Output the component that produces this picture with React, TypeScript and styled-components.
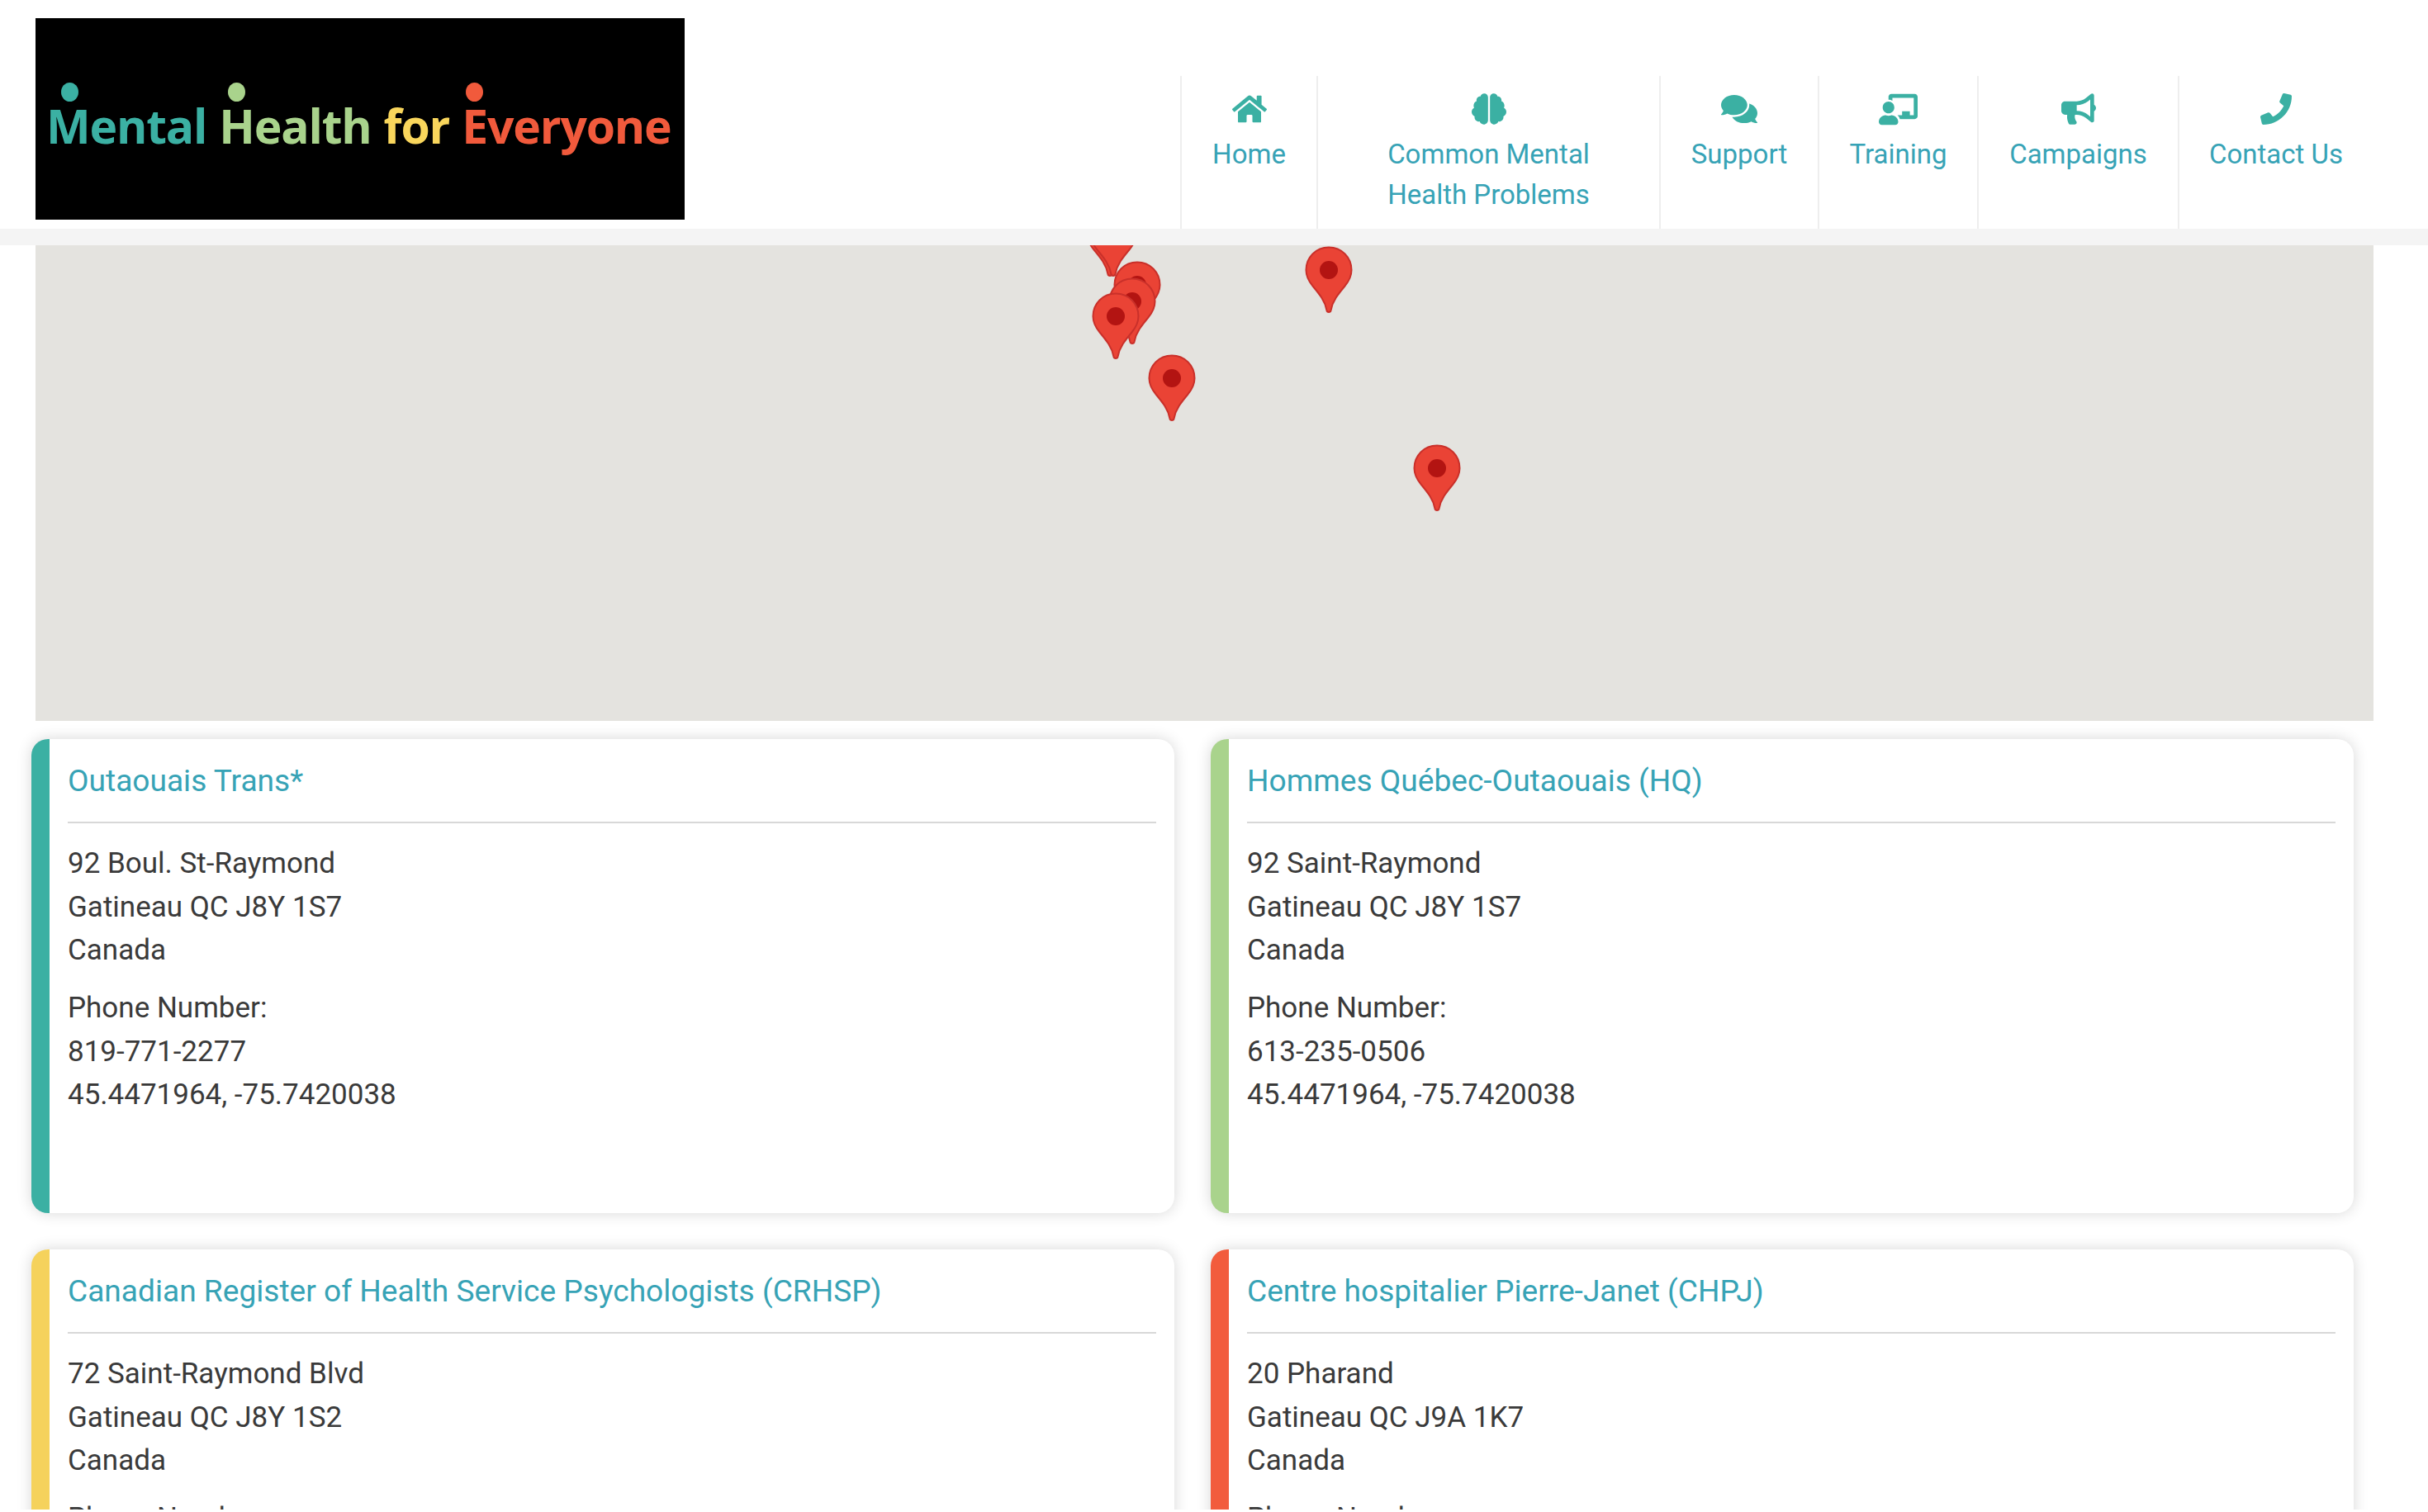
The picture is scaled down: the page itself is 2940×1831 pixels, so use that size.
import React from 'react';
import styled, { createGlobalStyle } from 'styled-components';
import { FaHome, FaBrain, FaComments, FaChalkboardTeacher, FaBullhorn, FaPhone } from 'react-icons/fa';

const GlobalStyle = createGlobalStyle`
  html, body {
    margin: 0;
    padding: 0;
    background: #fff;
    font-family: Roboto, "Liberation Sans", sans-serif;
  }
`;

const Page = styled.div`
  height: 1828px;
  overflow: hidden;
  background: #fff;
`;

const Header = styled.header`
  display: flex;
  justify-content: space-between;
  height: 277px;
  padding: 22px 67px 0 43px;
  box-sizing: border-box;
`;

const Logo = styled.div`
  width: 786px;
  height: 244px;
  box-sizing: border-box;
  background: #000;
  padding: 90px 0 0 13px;
  font-family: "Open Sans", sans-serif;
  font-weight: 700;
  font-size: 57px;
  letter-spacing: -1.2px;
  word-spacing: 1.5px;
  line-height: 80px;
  white-space: pre;
`;

const LogoWord = styled.span<{ $color: string; $dotLeft?: number }>`
  position: relative;
  color: ${({ $color }) => $color};

  ${({ $dotLeft, $color }) =>
    $dotLeft === undefined
      ? ''
      : `&::before {
    content: '';
    position: absolute;
    left: ${$dotLeft}px;
    top: -13px;
    width: 21px;
    height: 23px;
    border-radius: 50%;
    background: ${$color};
  }`}
`;

const Nav = styled.nav`
  display: flex;
  align-self: flex-end;
  height: 185px;
`;

const NavItem = styled.a<{ $width: number }>`
  width: ${({ $width }) => $width}px;
  box-sizing: border-box;
  display: flex;
  flex-direction: column;
  align-items: center;
  padding-top: 20px;
  border-left: 2px solid #eee;
  color: #37a3b6;
  font-size: 33px;
  line-height: 49px;
  text-align: center;
  text-decoration: none;
`;

const NavIcon = styled.span<{ $size: number }>`
  display: flex;
  align-items: center;
  justify-content: center;
  height: 40px;
  margin-bottom: 10px;
  color: #3bb0a3;

  svg {
    width: ${({ $size }) => $size}px;
    height: ${({ $size }) => $size}px;
  }
`;

const NavLabel = styled.span`
  max-width: 300px;
`;

const Strip = styled.div`
  height: 20px;
  background: #f4f4f4;
`;

const MapPanel = styled.div`
  position: relative;
  height: 576px;
  margin: 0 66px 0 43px;
  background: #e4e3df;
  overflow: hidden;
`;

const PinSvg = styled.svg<{ $x: number; $y: number }>`
  position: absolute;
  left: ${({ $x }) => $x}px;
  top: ${({ $y }) => $y}px;
  width: 58px;
  height: 82px;
`;

const Cards = styled.div`
  display: grid;
  grid-template-columns: 1384px 1384px;
  column-gap: 44px;
  row-gap: 44px;
  padding: 22px 0 0 38px;
`;

const Card = styled.article<{ $accent: string }>`
  height: 574px;
  box-sizing: border-box;
  padding: 0 22px;
  background: #fff;
  border-left: 22px solid ${({ $accent }) => $accent};
  border-radius: 20px;
  box-shadow: 0 0 18px rgba(0, 0, 0, 0.16);
`;

const CardTitle = styled.h3`
  margin: 0;
  height: 102px;
  padding-top: 23.5px;
  box-sizing: border-box;
  border-bottom: 2px solid #d8d8d8;
  color: #37a3b6;
  font-size: 37.125px;
  font-weight: 400;
  line-height: 54px;
`;

const CardBody = styled.div`
  padding-top: 23px;
  color: #3a3a3a;
  font-size: 35px;
  line-height: 52.5px;
`;

const Para = styled.p`
  margin: 0 0 17.5px;
`;

const Pin = ({ x, y }: { x: number; y: number }) => (
  <PinSvg $x={x} $y={y} viewBox="0 0 58 82">
    <path
      d="M29 1.500C13.500 1.500 1.500 13.500 1.500 29c0 8 3 13.500 8.500 20 7.500 9 14.500 17.500 16.500 29 .5 2.500 4.500 2.500 5 0 2-11.500 9-20 16.500-29 5.500-6.500 8.500-12 8.500-20C56.500 13.500 44.500 1.500 29 1.500z"
      fill="#ea4335"
      stroke="#c9302a"
      strokeWidth="2"
    />
    <circle cx="29" cy="29" r="11" fill="#b31412" />
  </PinSvg>
);

const navItems = [
  { label: 'Home', width: 165, size: 42, icon: <FaHome /> },
  { label: 'Common Mental Health Problems', width: 415, size: 42, icon: <FaBrain /> },
  { label: 'Support', width: 192, size: 44, icon: <FaComments /> },
  { label: 'Training', width: 193, size: 47, icon: <FaChalkboardTeacher /> },
  { label: 'Campaigns', width: 243, size: 42, icon: <FaBullhorn /> },
  { label: 'Contact Us', width: 236, size: 38, icon: <FaPhone /> },
];

const pins = [
  { x: 1272, y: -43 },
  { x: 1276, y: -43 },
  { x: 1305, y: 19 },
  { x: 1299, y: 39 },
  { x: 1279, y: 57 },
  { x: 1347, y: 132 },
  { x: 1537, y: 1 },
  { x: 1668, y: 241 },
];

const cards = [
  {
    accent: '#3bb0a3',
    title: 'Outaouais Trans*',
    address: ['92 Boul. St-Raymond', 'Gatineau QC J8Y 1S7', 'Canada'],
    contact: ['Phone Number:', '819-771-2277', '45.4471964, -75.7420038'],
  },
  {
    accent: '#a9d38c',
    title: 'Hommes Québec-Outaouais (HQ)',
    address: ['92 Saint-Raymond', 'Gatineau QC J8Y 1S7', 'Canada'],
    contact: ['Phone Number:', '613-235-0506', '45.4471964, -75.7420038'],
  },
  {
    accent: '#f5d25c',
    title: 'Canadian Register of Health Service Psychologists (CRHSP)',
    address: ['72 Saint-Raymond Blvd', 'Gatineau QC J8Y 1S2', 'Canada'],
    contact: ['Phone Number:'],
  },
  {
    accent: '#f25c3d',
    title: 'Centre hospitalier Pierre-Janet (CHPJ)',
    address: ['20 Pharand', 'Gatineau QC J9A 1K7', 'Canada'],
    contact: ['Phone Number:'],
  },
];

const Lines = ({ lines }: { lines: string[] }) => (
  <Para>
    {lines.map((line) => (
      <React.Fragment key={line}>
        {line}
        <br />
      </React.Fragment>
    ))}
  </Para>
);

const App = () => (
  <Page>
    <GlobalStyle />
    <Header>
      <Logo>
        <LogoWord $color="#3bb0a3" $dotLeft={18}>Mental </LogoWord>
        <LogoWord $color="#a9d38c" $dotLeft={11}>Health </LogoWord>
        <LogoWord $color="#f9d65c">for </LogoWord>
        <LogoWord $color="#f15a3c" $dotLeft={5}>Everyone</LogoWord>
      </Logo>
      <Nav>
        {navItems.map((item) => (
          <NavItem key={item.label} $width={item.width}>
            <NavIcon $size={item.size}>{item.icon}</NavIcon>
            <NavLabel>{item.label}</NavLabel>
          </NavItem>
        ))}
      </Nav>
    </Header>
    <Strip />
    <MapPanel>
      {pins.map((pin) => (
        <Pin key={`${pin.x}-${pin.y}`} x={pin.x} y={pin.y} />
      ))}
    </MapPanel>
    <Cards>
      {cards.map((card) => (
        <Card key={card.title} $accent={card.accent}>
          <CardTitle>{card.title}</CardTitle>
          <CardBody>
            <Lines lines={card.address} />
            <Lines lines={card.contact} />
          </CardBody>
        </Card>
      ))}
    </Cards>
  </Page>
);

export default App;
